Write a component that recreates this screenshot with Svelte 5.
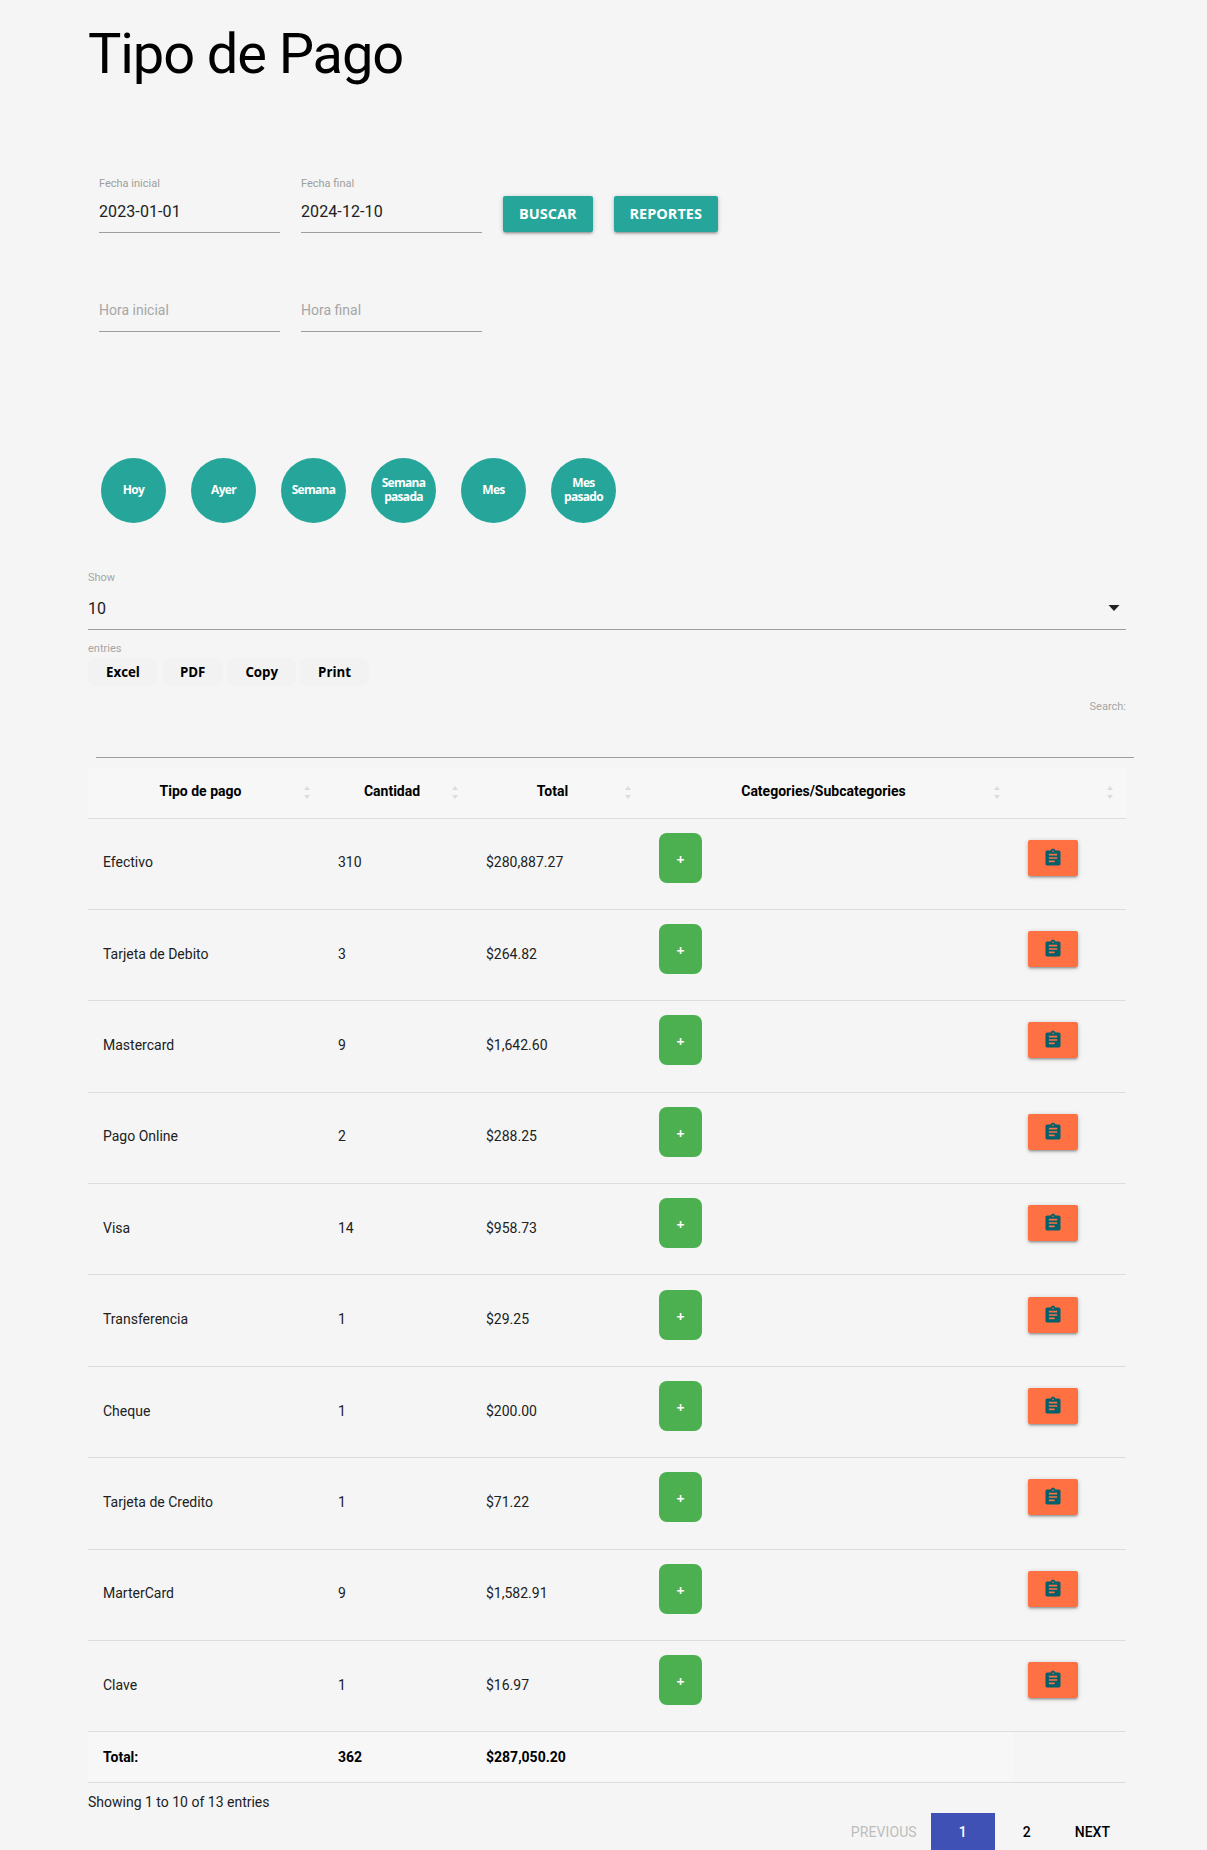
<script>
	const rows = [
		{ name: 'Efectivo', qty: '310', total: '$280,887.27' },
		{ name: 'Tarjeta de Debito', qty: '3', total: '$264.82' },
		{ name: 'Mastercard', qty: '9', total: '$1,642.60' },
		{ name: 'Pago Online', qty: '2', total: '$288.25' },
		{ name: 'Visa', qty: '14', total: '$958.73' },
		{ name: 'Transferencia', qty: '1', total: '$29.25' },
		{ name: 'Cheque', qty: '1', total: '$200.00' },
		{ name: 'Tarjeta de Credito', qty: '1', total: '$71.22' },
		{ name: 'MarterCard', qty: '9', total: '$1,582.91' },
		{ name: 'Clave', qty: '1', total: '$16.97' }
	];
	const ranges = ['Hoy', 'Ayer', 'Semana', 'Semana pasada', 'Mes', 'Mes pasado'];
	const exports = ['Excel', 'PDF', 'Copy', 'Print'];
	const headers = ['Tipo de pago', 'Cantidad', 'Total', 'Categories/Subcategories', ''];
</script>

<div class="page">
	<h1>Tipo de Pago</h1>

	<div class="filters">
		<div class="field">
			<label for="ini">Fecha inicial</label>
			<input id="ini" value="2023-01-01" />
		</div>
		<div class="field">
			<label for="fin">Fecha final</label>
			<input id="fin" value="2024-12-10" />
		</div>
		<button class="raised teal">BUSCAR</button>
		<button class="raised teal">REPORTES</button>
	</div>

	<div class="filters hours">
		<div class="field"><input placeholder="Hora inicial" /></div>
		<div class="field"><input placeholder="Hora final" /></div>
	</div>

	<div class="ranges">
		{#each ranges as range}
			<button class="circle">{range}</button>
		{/each}
	</div>

	<div class="length">
		<span class="small">Show</span>
		<div class="select">
			<span>10</span>
			<svg width="12" height="6" viewBox="0 0 12 6"><path d="M0.5 0h11L6 6z" fill="#212121" /></svg>
		</div>
		<span class="small entries">entries</span>
	</div>

	<div class="exports">
		{#each exports as item}
			<button class="export">{item}</button>
		{/each}
	</div>

	<div class="search">
		<span class="small">Search:</span>
		<input aria-label="Search" />
	</div>

	<table>
		<colgroup>
			<col style="width: 235px" />
			<col style="width: 148px" />
			<col style="width: 173px" />
			<col style="width: 369px" />
			<col style="width: 113px" />
		</colgroup>
		<thead>
			<tr>
				{#each headers as header}
					<th>
						{header}
						<svg class="sort" width="6" height="13" viewBox="0 0 6 13">
							<path d="M3 0l3 4H0zM3 13l3-4H0z" fill="#dcdcdc" />
						</svg>
					</th>
				{/each}
			</tr>
		</thead>
		<tbody>
			{#each rows as row}
				<tr>
					<td>{row.name}</td>
					<td>{row.qty}</td>
					<td>{row.total}</td>
					<td><div class="lift"><button class="plus">+</button></div></td>
					<td>
						<div class="lift">
							<button class="raised orange" aria-label="Ver detalle">
								<svg width="20" height="20" viewBox="0 0 24 24">
									<path
										fill="#00606b"
										d="M19 3h-4.18C14.4 1.84 13.3 1 12 1c-1.3 0-2.4.84-2.82 2H5c-1.1 0-2 .9-2 2v14c0 1.1.9 2 2 2h14c1.1 0 2-.9 2-2V5c0-1.1-.9-2-2-2zm-7 0c.55 0 1 .45 1 1s-.45 1-1 1-1-.45-1-1 .45-1 1-1zm2 14H7v-2h7v2zm3-4H7v-2h10v2zm0-4H7V7h10v2z"
									/>
								</svg>
							</button>
						</div>
					</td>
				</tr>
			{/each}
		</tbody>
		<tfoot>
			<tr>
				<td>Total:</td>
				<td>362</td>
				<td>$287,050.20</td>
				<td></td>
				<td class="blank"></td>
			</tr>
		</tfoot>
	</table>

	<div class="info">Showing 1 to 10 of 13 entries</div>

	<div class="pagination">
		<span class="prev">PREVIOUS</span>
		<span class="current">1</span>
		<span class="num">2</span>
		<span class="next">NEXT</span>
	</div>
</div>

<style>
	:global(body) {
		background: #f5f5f5;
		color: #000;
		font-family: Roboto, sans-serif;
	}

	.page {
		height: 1850px;
		overflow: hidden;
		box-sizing: border-box;
		padding: 0 81px 0 88px;
	}

	h1 {
		margin: 0;
		padding-top: 23px;
		font-size: 56px;
		line-height: 62px;
		font-weight: 400;
		letter-spacing: -1.1px;
	}

	.filters {
		display: flex;
		align-items: flex-end;
		gap: 21px;
		margin: 92px 0 0 11px;
	}

	.hours {
		margin-top: 57px;
	}

	.hours input {
		padding-bottom: 3px;
	}

	.field {
		width: 181px;
	}

	label {
		display: block;
		font-size: 11px;
		line-height: 14px;
		color: #9e9e9e;
	}

	input {
		display: block;
		box-sizing: border-box;
		width: 100%;
		height: 42px;
		padding: 0 0 1px;
		border: 0;
		border-bottom: 1px solid #9e9e9e;
		background: transparent;
		font: 16px Roboto, sans-serif;
		letter-spacing: 0.1px;
		color: #212121;
		outline: none;
	}

	input::placeholder {
		font-size: 14px;
		letter-spacing: 0;
		color: #a6a6a6;
	}

	button {
		border: 0;
		cursor: pointer;
		padding: 0;
	}

	.raised {
		height: 36px;
		border-radius: 2px;
		color: #fff;
		font: 700 14.5px "Open Sans", sans-serif;
		box-shadow:
			0 2px 2px 0 rgba(0, 0, 0, 0.14),
			0 3px 1px -2px rgba(0, 0, 0, 0.12),
			0 1px 5px 0 rgba(0, 0, 0, 0.2);
	}

	.teal {
		margin-bottom: 1px;
		background: #26a69a;
		padding: 0 16px 1px;
	}

	.orange {
		display: flex;
		align-items: center;
		justify-content: center;
		width: 50px;
		background: #ff7043;
	}

	.ranges {
		display: flex;
		gap: 25px;
		margin: 126px 0 0 13px;
	}

	.circle {
		width: 65px;
		height: 65px;
		padding: 0 10px 1px;
		border-radius: 50%;
		background: #26a69a;
		color: #fff;
		font: 700 12px/14px "Open Sans", sans-serif;
		letter-spacing: -0.7px;
	}

	.small {
		font-size: 11px;
		line-height: 14px;
		color: #a6a6a6;
	}

	.length {
		display: flex;
		flex-direction: column;
		margin-top: 48px;
	}

	.select {
		display: flex;
		align-items: center;
		justify-content: space-between;
		height: 42px;
		margin-top: 2px;
		padding-right: 6px;
		border-bottom: 1px solid #9e9e9e;
		font-size: 16px;
		color: #212121;
	}

	.entries {
		margin-top: 12px;
	}

	.exports {
		display: flex;
		gap: 4px;
		margin-top: 2px;
	}

	.export {
		height: 28px;
		padding: 0 18px;
		border-radius: 8px;
		background: #f2f2f2;
		color: #000;
		font: 700 13.3px "Open Sans", sans-serif;
	}

	.search {
		display: flex;
		flex-direction: column;
		align-items: flex-end;
		margin-top: 14px;
	}

	.search input {
		width: 1038px;
		height: 44px;
		margin-right: -8px;
	}

	table {
		width: 1038px;
		margin-top: 9px;
		table-layout: fixed;
		border-collapse: collapse;
		font-size: 14px;
	}

	th,
	td {
		padding: 0 25px 0 15px;
		text-align: left;
		color: #212121;
	}

	th {
		position: relative;
		box-sizing: border-box;
		height: 51px;
		padding-bottom: 2px;
		background: #f7f7f7;
		color: #000;
		font-weight: 700;
		text-align: center;
		border-bottom: 1px solid #ddd;
	}

	.sort {
		position: absolute;
		right: 13px;
		top: 19px;
	}

	tbody td {
		height: 91.4px;
		padding-bottom: 3px;
		box-sizing: border-box;
		border-bottom: 1px solid #ddd;
	}

	tfoot td {
		height: 50px;
		background: #f7f7f7;
		color: #000;
		font-weight: 700;
		border-bottom: 1px solid #ddd;
	}

	tfoot td.blank {
		background: transparent;
	}

	.lift {
		margin-top: -9px;
	}

	.plus {
		display: block;
		width: 43px;
		height: 50px;
		padding-top: 3px;
		border-radius: 8px;
		background: #4caf50;
		color: #fff;
		font: 700 14px "Open Sans", sans-serif;
	}

	.info {
		margin-top: 10px;
		font-size: 14px;
		line-height: 18px;
		color: #212121;
	}

	.pagination {
		display: flex;
		align-items: center;
		justify-content: flex-end;
		margin-top: 2px;
		height: 38px;
		font-size: 14px;
		font-weight: 500;
	}

	.prev {
		margin-right: 14px;
		color: #bdbdbd;
		font-weight: 400;
		letter-spacing: 0.1px;
	}

	.current {
		display: flex;
		align-items: center;
		justify-content: center;
		width: 64px;
		height: 38px;
		background: #3f51b5;
		color: #fff;
	}

	.num {
		width: 64px;
		text-align: center;
	}

	.next {
		padding-right: 16px;
		margin-left: 16px;
	}
</style>
